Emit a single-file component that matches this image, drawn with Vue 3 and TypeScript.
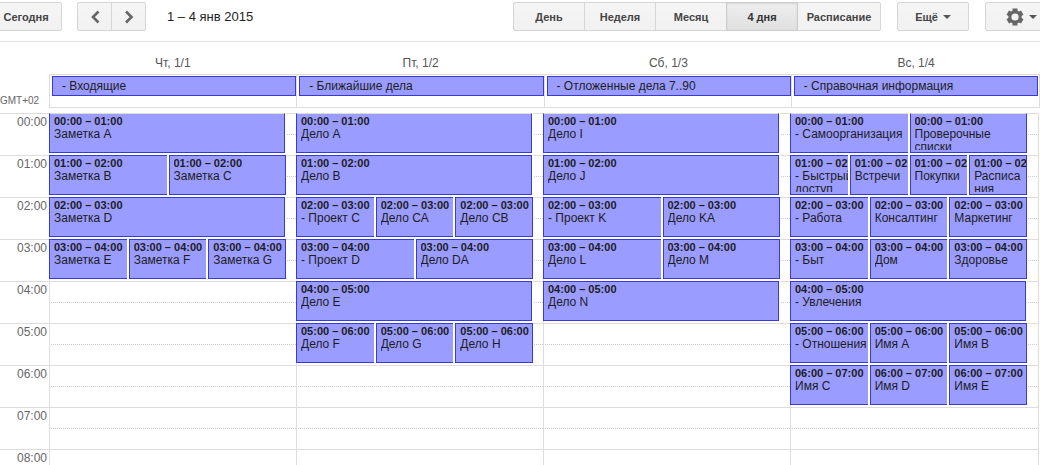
<script setup lang="ts">
import { ref } from 'vue'

interface Day {
  label: string
  allDay: string
  // Event titles, one list per starting hour
  hours: string[][]
}

const views = ['День', 'Неделя', 'Месяц', '4 дня', 'Расписание']
const activeView = ref('4 дня')

const days: Day[] = [
  {
    label: 'Чт, 1/1',
    allDay: '- Входящие',
    hours: [['Заметка A'], ['Заметка B', 'Заметка C'], ['Заметка D'], ['Заметка E', 'Заметка F', 'Заметка G']],
  },
  {
    label: 'Пт, 1/2',
    allDay: '- Ближайшие дела',
    hours: [
      ['Дело A'],
      ['Дело B'],
      ['- Проект C', 'Дело CA', 'Дело CB'],
      ['- Проект D', 'Дело DA'],
      ['Дело E'],
      ['Дело F', 'Дело G', 'Дело H'],
    ],
  },
  {
    label: 'Сб, 1/3',
    allDay: '- Отложенные дела 7..90',
    hours: [['Дело I'], ['Дело J'], ['- Проект K', 'Дело KA'], ['Дело L', 'Дело M'], ['Дело N']],
  },
  {
    label: 'Вс, 1/4',
    allDay: '- Справочная информация',
    hours: [
      ['- Самоорганизация', 'Проверочные\nсписки'],
      ['- Быстрый\nдоступ', 'Встречи', 'Покупки', 'Расписа\nния'],
      ['- Работа', 'Консалтинг', 'Маркетинг'],
      ['- Быт', 'Дом', 'Здоровье'],
      ['- Увлечения'],
      ['- Отношения', 'Имя A', 'Имя B'],
      ['Имя C', 'Имя D', 'Имя E'],
    ],
  },
]

const hourRows = Array.from({ length: 9 }, (_, i) => i)
const clock = (h: number): string => `${String(h).padStart(2, '0')}:00`
</script>

<template>
  <div class="calendar">
    <header class="toolbar">
      <button class="btn wide" type="button">Сегодня</button>
      <div class="group nav">
        <button class="btn" type="button" aria-label="Назад">
          <svg width="12" height="14" viewBox="0 0 12 14"><path d="M9.500 1.500 4 7l5.500 5.500" /></svg>
        </button>
        <button class="btn" type="button" aria-label="Вперёд">
          <svg width="12" height="14" viewBox="0 0 12 14"><path d="M3 1.500 8.500 7 3 12.500" /></svg>
        </button>
      </div>
      <h1 class="range">1 – 4 янв 2015</h1>
      <div class="group views">
        <button
          v-for="view in views"
          :key="view"
          class="btn wide"
          :class="{ active: view === activeView }"
          type="button"
          :aria-pressed="view === activeView"
          @click="activeView = view"
        >
          {{ view }}
        </button>
      </div>
      <button class="btn wide more" type="button">Ещё<span class="caret"></span></button>
      <button class="btn settings" type="button" aria-label="Настройки">
        <svg width="18" height="18" viewBox="0 0 18 18">
          <path
            class="gear"
            fill-rule="evenodd"
            d="M6.500.5h5v2.200l1.500.9 2-1 2.500 4.200-1.900 1.200v2l1.900 1.200-2.500 4.200-2-1-1.500.9v2.200h-5v-2.200L5 14.400l-2 1L.5 11.200 2.400 10V8L.5 6.800 3 2.600l2 1 1.500-.9zM9 5.400a3.600 3.600 0 1 0 0 7.200 3.600 3.600 0 0 0 0-7.200z"
          />
        </svg>
        <span class="caret"></span>
      </button>
    </header>

    <div class="day-names">
      <div v-for="day in days" :key="day.label" class="day-name">{{ day.label }}</div>
    </div>

    <div class="all-day">
      <div class="zone">GMT+02</div>
      <div class="all-day-cells">
        <div v-for="day in days" :key="day.label" class="all-day-cell">
          <div class="all-day-event">{{ day.allDay }}</div>
        </div>
      </div>
    </div>

    <main class="hours">
      <div v-for="h in hourRows" :key="h" class="hour-row">
        <div class="hour-label">{{ clock(h) }}</div>
        <div v-for="day in days" :key="day.label" class="cell">
          <div v-if="day.hours[h]" class="events">
            <article v-for="title in day.hours[h]" :key="title" class="event">
              <div class="event-body">
                <div class="time">{{ clock(h) }} – {{ clock(h + 1) }}</div>
                <div class="title">{{ title }}</div>
              </div>
            </article>
          </div>
        </div>
      </div>
    </main>
  </div>
</template>

<style>
body {
  margin: 0;
  background: #fff;
}
</style>

<style scoped>
.calendar {
  display: flex;
  flex-direction: column;
  height: 100vh;
  overflow: hidden;
  font-family: 'Liberation Sans', Arial, sans-serif;
  font-size: 12px;
  color: #1d1d1d;
}
.calendar * {
  box-sizing: border-box;
}
.toolbar {
  display: flex;
  flex: none;
  height: 42px;
  margin: 0 -18px 0 -10px;
  padding-top: 2px;
  border-bottom: 1px solid #e5e5e5;
}
.btn {
  display: flex;
  flex: none;
  align-items: center;
  justify-content: center;
  height: 29px;
  padding: 0;
  border: 1px solid #d6d6d6;
  border-radius: 2px;
  background: linear-gradient(#f5f5f5, #f1f1f1);
  color: #444;
  font: bold 11px 'Liberation Sans', Arial, sans-serif;
  white-space: nowrap;
}
.wide {
  min-width: 72px;
  padding: 0 8px;
}
.group {
  display: flex;
}
.group .btn {
  border-radius: 0;
}
.group .btn + .btn {
  margin-left: -1px;
}
.group .btn:first-child {
  border-radius: 2px 0 0 2px;
}
.group .btn:last-child {
  border-radius: 0 2px 2px 0;
}
.nav {
  margin-left: 15px;
}
.nav .btn {
  width: 35px;
}
.nav path {
  fill: none;
  stroke: #666;
  stroke-width: 2.6;
}
.range {
  margin: 0 auto 0 21px;
  font-size: 13px;
  font-weight: normal;
  line-height: 30px;
  color: #222;
}
.views .btn:last-child {
  min-width: 84px;
}
.views .active {
  z-index: 1;
  border-color: #ccc;
  background: linear-gradient(#eee, #e0e0e0);
  box-shadow: inset 0 1px 2px rgba(0, 0, 0, 0.1);
  color: #333;
}
.more {
  margin-left: 16px;
}
.settings {
  width: 73px;
  margin-left: 16px;
}
.gear {
  fill: #666;
}
.caret {
  margin-left: 5px;
  border: 4px solid transparent;
  border-top-color: #555;
  border-bottom: 0;
}
.day-names {
  display: flex;
  flex: none;
  height: 32px;
  padding-left: 49px;
  line-height: 42px;
  color: #555;
}
.day-name {
  flex: 1;
  text-align: center;
}
.all-day {
  display: flex;
  flex: none;
  height: 34px;
  margin-bottom: 5px;
}
.zone {
  display: flex;
  flex: none;
  align-items: flex-end;
  width: 49px;
  line-height: 14px;
  font-size: 10px;
  color: #666;
}
.all-day-cells {
  display: flex;
  flex: 1;
  border: solid #ddd;
  border-width: 1px 0;
}
.all-day-cell {
  flex: 1;
  min-width: 0;
  padding: 1px 0 0 2px;
  border-left: 1px solid #ddd;
}
.all-day-cell:last-child {
  padding-right: 1px;
  border-right: 1px solid #ddd;
}
.all-day-event {
  height: 20px;
  padding-left: 9px;
  border: 1px solid #373ad7;
  background: #9a9cff;
  line-height: 18px;
  white-space: nowrap;
  overflow: hidden;
}
.hours {
  flex: 1;
  min-height: 0;
  margin-right: 1px;
  overflow: hidden;
}
.hour-row {
  display: flex;
  height: 42px;
  padding-right: 1px;
  border-top: 1px solid #ddd;
  border-right: 1px solid #ddd;
}
.hour-label {
  flex: none;
  width: 49px;
  padding-right: 2px;
  line-height: 17px;
  text-align: right;
  color: #666;
}
.cell {
  flex: 1;
  min-width: 0;
  border-left: 1px solid #ddd;
  background: linear-gradient(to right, #ccc 1px, transparent 1px) 1px 20px / 2px 1px repeat-x;
}
.events {
  display: grid;
  grid-template-rows: 40px;
  grid-auto-columns: minmax(0, 1fr);
  grid-auto-flow: column;
  gap: 2px;
  margin: -1px 10px 0 -1px;
  background: #fff;
}
.event {
  padding: 1px 0 2px 4px;
  border: 1px solid #373ad7;
  border-right-width: 0;
  background: #9a9cff;
}
.event:last-child {
  border-right-width: 1px;
}
.event:only-child {
  margin-right: 1px;
}
.hour-row:first-child .event {
  border-top-color: #ddd;
}
.event-body {
  height: 100%;
  overflow: hidden;
}
.time {
  font-size: 11px;
  font-weight: bold;
  line-height: 13px;
  white-space: nowrap;
}
.title {
  line-height: 13px;
  white-space: pre;
}
</style>
